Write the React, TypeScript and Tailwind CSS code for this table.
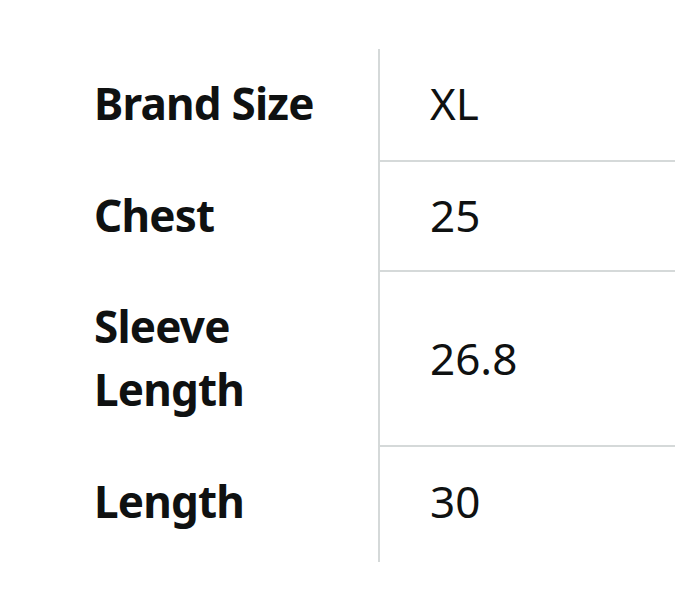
import React from "react";

const rows: { label: string[]; value: string; pad: string }[] = [
  { label: ["Brand Size"], value: "XL", pad: "pt-[23px] pb-[25px]" },
  { label: ["Chest"], value: "25", pad: "pt-[22px] pb-[23px]" },
  { label: ["Sleeve", "Length"], value: "26.8", pad: "pt-[23px] pb-[24px]" },
  { label: ["Length"], value: "30", pad: "pt-[23px] pb-[29px]" },
];

export default function App() {
  return (
    <div
      className="w-[675px] h-[598px] bg-white text-[#0f1111] overflow-hidden"
      style={{ fontFamily: '"Noto Sans", "Open Sans", sans-serif' }}
    >
      <div className="pt-[49px] pl-[94px]">
        <div className="grid grid-cols-[284px_1fr] text-[44px] leading-[63px]">
          {rows.map((r, i) => {
            const last = i === rows.length - 1;
            return (
              <React.Fragment key={i}>
                <div
                  className={
                    "flex flex-col justify-center font-bold tracking-[-0.8px] " +
                    r.pad +
                    (last ? "" : " border-b-2 border-transparent")
                  }
                >
                  {r.label.map((l, j) => (
                    <span key={j}>{l}</span>
                  ))}
                </div>
                <div
                  className={
                    "flex items-center border-l-[2px] border-[#d5d9d9] pl-[50px] " +
                    r.pad +
                    (last ? "" : " border-b-2")
                  }
                >
                  {r.value}
                </div>
              </React.Fragment>
            );
          })}
        </div>
      </div>
    </div>
  );
}
